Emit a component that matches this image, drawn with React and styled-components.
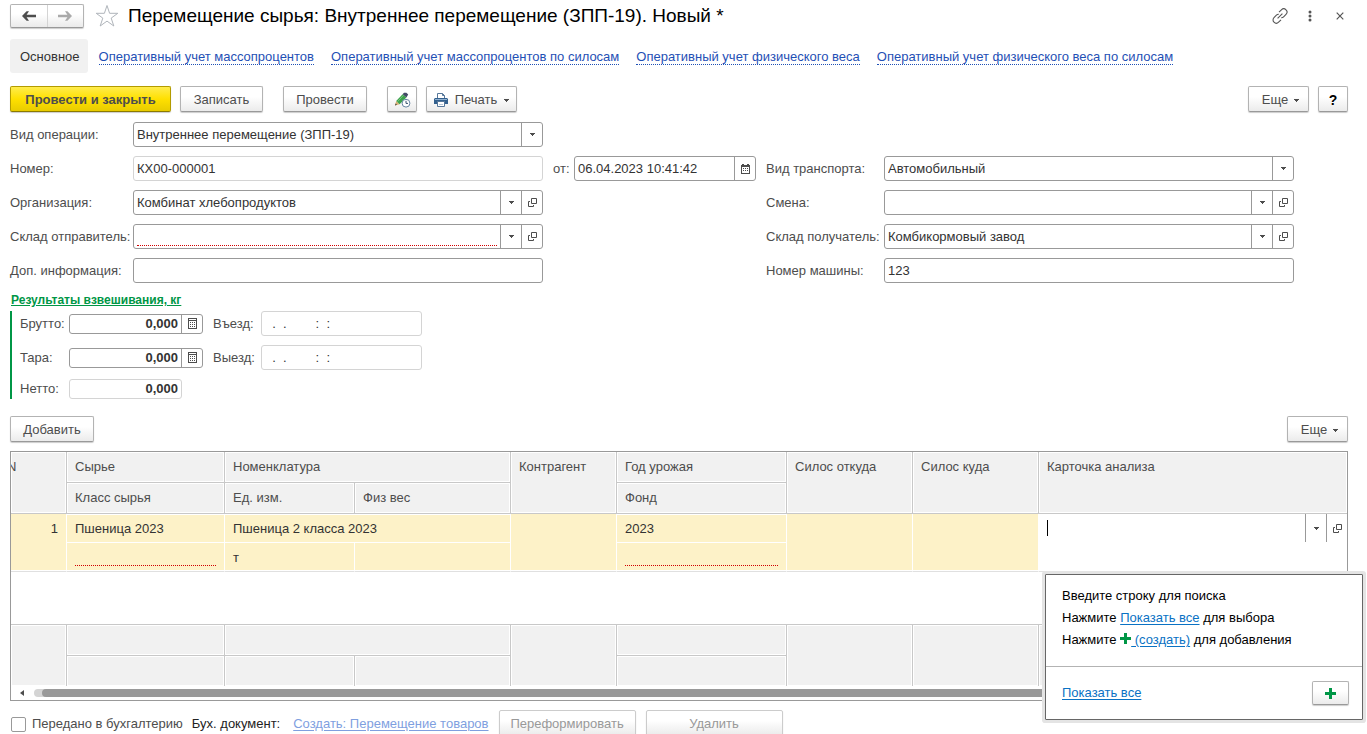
import React from "react";
import styled, { createGlobalStyle, css } from "styled-components";

const GlobalStyle = createGlobalStyle`
  *, *::before, *::after { box-sizing: border-box; }
  body { margin: 0; background: #fff; }
  body, button, input, select, table {
    font-family: "Liberation Sans", Arial, sans-serif;
    font-size: 13px;
    line-height: 16px;
    color: #4d4d4d;
  }
  button, input, select { margin: 0; }
  svg { display: block; flex: none; }
`;

const Page = styled.main`
  height: 100vh;
  overflow: hidden;
  padding: 4px 19px 0 10px;
`;

/* ---------- title ---------- */
const TitleBar = styled.header`
  display: flex;
  align-items: center;
  height: 24px;
  margin-bottom: 11px;
`;
const raised = css`
  border: 1px solid #b3b3b3;
  border-bottom-color: #999;
  border-radius: 2px;
  background: linear-gradient(#fff 40%, #ebebeb);
  box-shadow: 0 1px 1px #ccc;
`;
const NavGroup = styled.div`
  ${raised}
  display: flex;
  width: 74px;
  height: 24px;
  margin-right: 11px;
`;
const NavButton = styled.button`
  flex: 1;
  display: flex;
  align-items: center;
  justify-content: center;
  border: 0;
  padding: 0;
  background: none;
  & + & { border-left: 1px solid #d4d4d4; }
`;
const PlainButton = styled.button`
  display: flex;
  align-items: center;
  justify-content: center;
  width: 24px;
  height: 24px;
  padding: 0;
  border: 0;
  background: none;
`;
const Title = styled.h1`
  flex: 1;
  margin: 0 0 0 9px;
  font-size: 19px;
  font-weight: 400;
  line-height: 24px;
  color: #000;
  white-space: nowrap;
`;
const WindowTools = styled.div`
  display: flex;
  gap: 6px;
  margin-right: -4px;
`;

/* ---------- section links ---------- */
const Tabs = styled.nav`
  display: flex;
  align-items: center;
  height: 34px;
  margin-bottom: 13px;
  white-space: nowrap;
`;
const ActiveTab = styled.span`
  padding: 10px 8px 8px 10px;
  margin-right: 11px;
  border-radius: 3px;
  background: #f1f1f1;
  color: #333;
`;
const TabLink = styled.a`
  margin: 2px 17px 0 0;
  line-height: 14px;
  color: #1f50b5;
  text-decoration: none;
  border-bottom: 1px dotted #1f50b5;
`;

/* ---------- buttons ---------- */
const Bar = styled.div`
  display: flex;
  gap: 20px;
  height: 26px;
  margin-bottom: ${(p) => (p.$after || 9)}px;
`;
const Group = styled.div`
  display: flex;
  gap: 9px;
  ${(p) => p.$end && "margin-left: auto;"}
`;
const Button = styled.button`
  ${raised}
  display: flex;
  align-items: center;
  justify-content: center;
  gap: 7px;
  height: ${(p) => (p.$short ? 24 : 26)}px;
  width: ${(p) => p.$width}px;
  padding: ${(p) => (p.$short ? 0 : "2px 0 0")};
  white-space: nowrap;
  ${(p) => p.$menu && "padding-left: 4px; gap: 6px;"}
  ${(p) => p.$help && "color: #000; font-weight: 700; font-size: 14px;"}
  ${(p) =>
    p.$primary &&
    css`
      font-weight: 700;
      border-color: #b39b00;
      border-bottom-color: #8c7a00;
      background: linear-gradient(#ffec4d, #ffe000 50%, #e8cc00);
    `}
  &:disabled {
    color: #999;
    border-color: #ccc;
  }
`;

/* ---------- fields ---------- */
const FormGrid = styled.div`
  display: grid;
  grid-template-columns: 123px minmax(0, 410px) 31px 182px 128px minmax(0, 410px);
  grid-auto-rows: 25px;
  row-gap: 9px;
  align-items: center;
`;
const Label = styled.label`
  grid-column: ${(p) => p.$col || "auto"};
  padding-left: ${(p) => p.$inset || 0}px;
  white-space: nowrap;
`;
const Field = styled.div`
  display: flex;
  height: ${(p) => (p.$low ? 20 : 25)}px;
  width: ${(p) => (p.$width ? `${p.$width}px` : "auto")};
  border: 1px solid ${(p) => (p.$readonly ? "#d4d4d4" : "#999")};
  border-radius: 3px;
  background: #fff;
`;
const Input = styled.input`
  flex: 1;
  min-width: 0;
  margin: 0 3px;
  padding: 0;
  border: 0;
  outline: 0;
  background: transparent;
  color: #333;
  ${(p) =>
    p.$required && "margin-bottom: 2px; border-bottom: 1px dotted #d00000;"}
  ${(p) => p.$number && "text-align: right; font-weight: 700;"}
`;
const FieldButton = styled.button`
  display: flex;
  align-items: center;
  justify-content: center;
  width: 21px;
  padding: 0;
  border: 0;
  border-left: 1px solid #999;
  background: none;
`;
const SelectField = styled(Field)`
  display: grid;
  grid-template-columns: minmax(0, 1fr) 21px;
`;
const Select = styled.select`
  grid-area: 1 / 1 / 2 / 3;
  appearance: none;
  padding: 0 24px 0 3px;
  border: 0;
  background: transparent;
  color: #333;
`;
const SelectArrow = styled.span`
  grid-area: 1 / 2 / 2 / 3;
  display: flex;
  align-items: center;
  justify-content: center;
  border-left: 1px solid #999;
  pointer-events: none;
`;

/* ---------- weighing ---------- */
const WeighTitle = styled.h2`
  margin: 9px 0 3px 1px;
  font-size: 12px;
  line-height: 16px;
  font-weight: 700;
  color: #009646;
  text-decoration: underline;
`;
const WeighGrid = styled.div`
  display: grid;
  grid-template-columns: 57px 134px 58px 161px;
  grid-template-rows: 25px 25px 20px;
  row-gap: 9px;
  align-items: center;
  border-left: 2px solid #009646;
  margin-bottom: 17px;
`;

/* ---------- table ---------- */
const TableArea = styled.section`
  position: relative;
  margin-bottom: 9px;
`;
const TableFrame = styled.div`
  border: 1px solid #999;
`;
const Table = styled.table`
  width: 100%;
  table-layout: fixed;
  border-collapse: separate;
  border-spacing: 0;
`;
const HeadCell = styled.th`
  height: 31px;
  padding: 7px 8px;
  overflow: hidden;
  text-align: left;
  vertical-align: top;
  font-weight: 400;
  white-space: nowrap;
  background: #f1f1f1;
  border-right: 1px solid #c8c8c8;
  border-bottom: 1px solid #c8c8c8;
  box-shadow: inset 0 0 0 1px #fff;
  ${(p) => p.$scrolled && "padding-left: 0; text-indent: -4px;"}
  ${(p) => p.$last && "border-right: 0;"}
`;
const FootCell = styled.td`
  height: ${(p) => (p.$lower ? 30 : 31)}px;
  padding: 0;
  background: #f1f1f1;
  border-right: 1px solid #c8c8c8;
  border-bottom: ${(p) => (p.$upper ? 1 : 0)}px solid #c8c8c8;
  box-shadow: inset 0 0 0 1px #fff;
`;
const Cell = styled.td`
  height: 29px;
  padding: 7px 8px 4px;
  vertical-align: top;
  color: #333;
  white-space: nowrap;
  background: #fdf2c8;
  border-right: 1px solid #fff;
  border-bottom: 1px solid ${(p) => (p.$upper ? "#fff" : "#e0e0e0")};
  box-shadow: inset 0 ${(p) => (p.$upper ? "1px" : "-1px")} 0 #fff;
  ${(p) => p.$right && "text-align: right;"}
`;
const EditCell = styled(Cell)`
  padding: 0;
  background: #fff;
  border-right: 0;
`;
const Missing = styled.div`
  height: 16px;
  border-bottom: 1px dotted #d00000;
`;
const Editor = styled.div`
  display: flex;
  align-items: center;
  height: 28px;
`;
const Caret = styled.span`
  width: 1px;
  height: 16px;
  margin-left: 8px;
  background: #000;
`;
const EditorButton = styled(FieldButton)`
  height: 28px;
`;
const EmptyRow = styled.td`
  height: 53px;
  padding: 0;
  border-bottom: 1px solid #c8c8c8;
`;
const ScrollBar = styled.div`
  display: flex;
  align-items: center;
  gap: 10px;
  height: 14px;
  padding: 0 9px;
`;
const Track = styled.div`
  flex: 1;
  height: 8px;
  padding-left: 8px;
  border-radius: 4px;
  background: #d4d4d4;
`;
const Thumb = styled.div`
  height: 8px;
  border-radius: 4px;
  background: #999;
`;

/* ---------- lookup popup ---------- */
const Popup = styled.aside`
  position: absolute;
  top: 123px;
  right: -15px;
  width: 318px;
  border: 1px solid #666;
  background: #fff;
  border-radius: 1px;
  box-shadow: 0 0 0 3px #e4e4e4;
  color: #000;
`;
const Hint = styled.div`
  padding: 10px 16px 15px;
  line-height: 22px;
  border-bottom: 1px solid #b3b3b3;
`;
const HintLine = styled.p`
  margin: 0;
  svg { display: inline-block; vertical-align: baseline; }
`;
const PopupFooter = styled.div`
  display: flex;
  align-items: center;
  justify-content: space-between;
  height: 52px;
  padding: 0 13px 0 16px;
`;
const Link = styled.a`
  color: ${(p) => (p.$muted ? "#7f9fdf" : "#0a72c4")};
  text-decoration: underline;
  text-underline-offset: 2px;
`;

/* ---------- bottom ---------- */
const Bottom = styled.footer`
  display: flex;
  align-items: center;
  height: 28px;
  white-space: nowrap;
`;
const Check = styled.label`
  display: flex;
  align-items: center;
  gap: 6px;
  margin: 0 9px 0 1px;
  input {
    appearance: none;
    width: 15px;
    height: 15px;
    border: 1px solid #999;
    border-radius: 2px;
    background: #fff;
  }
`;
const DocLabel = styled.span`
  margin-right: 13px;
  color: #222;
`;
const BottomButtons = styled.div`
  display: flex;
  align-self: flex-start;
  gap: 10px;
  margin-left: 10px;
`;

/* ---------- icons ---------- */
const Arrow = ({ flip, color }) => (
  <svg width="14" height="12" viewBox="0 0 14 12">
    <g transform={flip ? "matrix(-1 0 0 1 14 0)" : undefined}>
      <path d="M0 6 5 1h2v3.8h7v2.4H7V11H5z" fill="none" />
      <path d="M0 6 4.6 1.2H7L4.6 4.8H14v2.4H4.6L7 10.8H4.6z" fill={color} />
    </g>
  </svg>
);
const Star = () => (
  <svg width="24" height="24" viewBox="0 0 24 24" fill="none" stroke="#b0b5bb">
    <path d="M12 1.5 14.6 9.3H22.8L16.2 14.1 18.8 22 12 17.1 5.2 22 7.8 14.1 1.2 9.3H9.4z" />
  </svg>
);
const Chain = () => (
  <svg width="16" height="16" viewBox="0 0 16 16" fill="none" stroke="#555" strokeWidth="1.1">
    <path d="M7 4.2 9.4 1.8a3.2 3.2 0 0 1 4.6 4.6L11.6 8.8a3 3 0 0 1-2.4.9" />
    <path d="M9 11.8 6.6 14.2A3.2 3.2 0 0 1 2 9.6L4.4 7.2a3 3 0 0 1 2.4-.9" />
    <path d="m5.6 10.4 4.8-4.8" />
  </svg>
);
const Dots = () => (
  <svg width="4" height="12" viewBox="0 0 4 12" fill="#555">
    <circle cx="2" cy="2" r="1.5" /><circle cx="2" cy="6" r="1.5" /><circle cx="2" cy="10" r="1.5" />
  </svg>
);
const Cross = () => (
  <svg width="8" height="8" viewBox="0 0 8 8" stroke="#555" strokeWidth="1.2">
    <path d="m.7.7 6.6 6.6M7.3.7.7 7.3" />
  </svg>
);
const Down = () => (
  <svg width="5" height="3" viewBox="0 0 5 3" fill="#4d4d4d">
    <path d="M0 0h5v1H4v1H3v1H2V2H1V1H0z" />
  </svg>
);
const Open = () => (
  <svg width="9" height="9" viewBox="0 0 9 9" fill="none" stroke="#4d4d4d">
    <path d="M3.5.5h5v5h-5zM2 3.5H.5v5h5V7" />
  </svg>
);
const Calendar = () => (
  <svg width="9" height="10" viewBox="0 0 9 10" fill="#4d4d4d">
    <path d="M0 1h1V0h2v1h3V0h2v1h1v9H0zM1 3v6h7V3z" fillRule="evenodd" />
    <path d="M2 4h1v1H2zM4 4h1v1H4zM6 4h1v1H6zM2 6h1v1H2zM4 6h1v1H4zM6 6h1v1H6z" />
  </svg>
);
const Calculator = () => (
  <svg width="9" height="11" viewBox="0 0 9 11" fill="#4d4d4d">
    <path d="M0 0h9v11H0zM1 1v1h7V1zM1 3v7h7V3z" fillRule="evenodd" />
    <path d="M2 4h1v1H2zM4 4h1v1H4zM6 4h1v1H6zM2 6h1v1H2zM4 6h1v1H4zM6 6h1v1H6zM2 8h1v1H2zM4 8h1v1H4zM6 8h1v1H6z" />
  </svg>
);
const PencilClock = () => (
  <svg width="17" height="16" viewBox="0 0 17 16">
    <path d="M1 13.5 2.2 9l3.4 3.2z" fill="#d7ae72" />
    <path d="M1 13.5 1.6 11.4 3 12.8z" fill="#444" />
    <path d="M2.2 9 8.6 2.2 12.4 5.4 5.6 12.2z" fill="#3da24c" />
    <path d="M3.6 9.6 9.6 3.2" stroke="#75c77c" />
    <path d="M8.6 2.2 10 .8h2.4l1.8 1.8-1.8 2.8z" fill="#424a66" />
    <circle cx="12" cy="11.2" r="3.9" fill="#fff" stroke="#6683a0" />
    <path d="M12 8.8v2.6h2" fill="none" stroke="#35506e" />
  </svg>
);
const Printer = () => (
  <svg width="14" height="14" viewBox="0 0 14 14">
    <path d="M3.5 5V.5h5l2 2V5" fill="#fff" stroke="#56779a" />
    <path d="M8.5.5v2h2" fill="none" stroke="#56779a" />
    <path d="M1 5h12l1 1v5H0V6z" fill="#33608e" />
    <path d="M1 6.5h12" stroke="#8fb0d0" />
    <path d="M3.5 8.5h7v5h-7z" fill="#fff" stroke="#56779a" />
    <path d="M5 11.5h4" stroke="#b7c7d8" />
  </svg>
);
const Plus = () => (
  <svg width="11" height="11" viewBox="0 0 11 11" fill="#009646">
    <path d="M4 0h3v4h4v3H7v4H4V7H0V4h4z" />
  </svg>
);
const Left = () => (
  <svg width="4" height="6" viewBox="0 0 4 6" fill="#4d4d4d"><path d="M4 0v6L0 3z" /></svg>
);

/* ---------- field kinds ---------- */
function ChoiceField({ id, label, value, col, inset }) {
  return (
    <>
      <Label htmlFor={id} $col={col} $inset={inset}>{label}</Label>
      <SelectField>
        <Select id={id} defaultValue={value}><option>{value}</option></Select>
        <SelectArrow><Down /></SelectArrow>
      </SelectField>
    </>
  );
}
function LookupField({ id, label, value = "", required, col, inset }) {
  return (
    <>
      <Label htmlFor={id} $col={col} $inset={inset}>{label}</Label>
      <Field>
        <Input id={id} defaultValue={value} $required={required} />
        <FieldButton type="button" aria-label="Выбрать"><Down /></FieldButton>
        <FieldButton type="button" aria-label="Открыть"><Open /></FieldButton>
      </Field>
    </>
  );
}
function TextField({ id, label, value = "", readOnly, col, inset, children }) {
  return (
    <>
      <Label htmlFor={id} $col={col} $inset={inset}>{label}</Label>
      <Field $readonly={readOnly}>
        <Input id={id} defaultValue={value} readOnly={readOnly} />
        {children}
      </Field>
    </>
  );
}
function WeightField({ id, label, readOnly }) {
  return (
    <>
      <Label htmlFor={id} $inset={8} $col={1}>{label}</Label>
      <Field $low $readonly={readOnly} $width={readOnly ? 113 : 134}>
        <Input id={id} defaultValue="0,000" readOnly={readOnly} $number />
        {!readOnly && (
          <FieldButton type="button" aria-label="Калькулятор"><Calculator /></FieldButton>
        )}
      </Field>
    </>
  );
}

const emptyTime = "\u00a0\u00a0.\u00a0\u00a0.\u00a0\u00a0\u00a0\u00a0\u00a0\u00a0\u00a0\u00a0:\u00a0\u00a0:";
const links = [
  "Оперативный учет массопроцентов",
  "Оперативный учет массопроцентов по силосам",
  "Оперативный учет физического веса",
  "Оперативный учет физического веса по силосам",
];
const columns = [56, 158, 130, 156, 106, 170, 126, 126];

export default function App() {
  return (
    <Page>
      <GlobalStyle />
      <TitleBar>
        <NavGroup>
          <NavButton type="button" aria-label="Назад"><Arrow color="#4d4d4d" /></NavButton>
          <NavButton type="button" aria-label="Вперед"><Arrow flip color="#aaa" /></NavButton>
        </NavGroup>
        <PlainButton type="button" aria-label="В избранное"><Star /></PlainButton>
        <Title>Перемещение сырья: Внутреннее перемещение (ЗПП-19). Новый *</Title>
        <WindowTools>
          <PlainButton type="button" aria-label="Ссылка"><Chain /></PlainButton>
          <PlainButton type="button" aria-label="Меню"><Dots /></PlainButton>
          <PlainButton type="button" aria-label="Закрыть"><Cross /></PlainButton>
        </WindowTools>
      </TitleBar>

      <Tabs>
        <ActiveTab>Основное</ActiveTab>
        {links.map((text) => <TabLink href="#" key={text}>{text}</TabLink>)}
      </Tabs>

      <Bar $after={10}>
        <Group>
          <Button type="button" $primary $width={161}>Провести и закрыть</Button>
          <Button type="button" $width={83}>Записать</Button>
        </Group>
        <Button type="button" $width={84}>Провести</Button>
        <Group>
          <Button type="button" $width={30} aria-label="Отложить"><PencilClock /></Button>
          <Button type="button" $width={91}><Printer />Печать<Down /></Button>
        </Group>
        <Group $end>
          <Button type="button" $menu $width={61}>Еще<Down /></Button>
          <Button type="button" $width={30} $help>?</Button>
        </Group>
      </Bar>

      <FormGrid>
        <ChoiceField id="operation" label="Вид операции:" value="Внутреннее перемещение (ЗПП-19)" col={1} />
        <TextField id="number" label="Номер:" value="КХ00-000001" readOnly col={1} />
        <TextField id="date" label="от:" value="06.04.2023 10:41:42" inset={10}>
          <FieldButton type="button" aria-label="Календарь"><Calendar /></FieldButton>
        </TextField>
        <ChoiceField id="transport" label="Вид транспорта:" value="Автомобильный" inset={10} />
        <LookupField id="company" label="Организация:" value="Комбинат хлебопродуктов" col={1} />
        <LookupField id="shift" label="Смена:" col={5} inset={10} />
        <LookupField id="from" label="Склад отправитель:" required col={1} />
        <LookupField id="to" label="Склад получатель:" value="Комбикормовый завод" col={5} inset={10} />
        <TextField id="extra" label="Доп. информация:" col={1} />
        <TextField id="car" label="Номер машины:" value="123" col={5} inset={10} />
      </FormGrid>

      <WeighTitle>Результаты взвешивания, кг</WeighTitle>
      <WeighGrid>
        <WeightField id="gross" label="Брутто:" />
        <TextField id="entry" label="Въезд:" value={emptyTime} readOnly inset={10} />
        <WeightField id="tare" label="Тара:" />
        <TextField id="exit" label="Выезд:" value={emptyTime} readOnly inset={10} />
        <WeightField id="net" label="Нетто:" readOnly />
      </WeighGrid>

      <Bar>
        <Button type="button" $width={84}>Добавить</Button>
        <Group $end><Button type="button" $menu $width={61}>Еще<Down /></Button></Group>
      </Bar>

      <TableArea>
        <TableFrame>
          <Table>
            <colgroup>
              {columns.map((width, i) => <col key={i} width={width} />)}
              <col />
            </colgroup>
            <thead>
              <tr>
                <HeadCell rowSpan={2} $scrolled>N</HeadCell>
                <HeadCell>Сырье</HeadCell>
                <HeadCell colSpan={2}>Номенклатура</HeadCell>
                <HeadCell rowSpan={2}>Контрагент</HeadCell>
                <HeadCell>Год урожая</HeadCell>
                <HeadCell rowSpan={2}>Силос откуда</HeadCell>
                <HeadCell rowSpan={2}>Силос куда</HeadCell>
                <HeadCell rowSpan={2} $last>Карточка анализа</HeadCell>
              </tr>
              <tr>
                <HeadCell>Класс сырья</HeadCell>
                <HeadCell>Ед. изм.</HeadCell>
                <HeadCell>Физ вес</HeadCell>
                <HeadCell>Фонд</HeadCell>
              </tr>
            </thead>
            <tbody>
              <tr>
                <Cell rowSpan={2} $right>1</Cell>
                <Cell $upper>Пшеница 2023</Cell>
                <Cell $upper colSpan={2}>Пшеница 2 класса 2023</Cell>
                <Cell rowSpan={2} />
                <Cell $upper>2023</Cell>
                <Cell rowSpan={2} />
                <Cell rowSpan={2} />
                <EditCell rowSpan={2}>
                  <Editor>
                    <Caret />
                    <Input aria-label="Карточка анализа" />
                    <EditorButton type="button" aria-label="Выбрать"><Down /></EditorButton>
                    <EditorButton type="button" aria-label="Открыть"><Open /></EditorButton>
                  </Editor>
                </EditCell>
              </tr>
              <tr>
                <Cell><Missing /></Cell>
                <Cell>т</Cell>
                <Cell />
                <Cell><Missing /></Cell>
              </tr>
              <tr><EmptyRow colSpan={9} /></tr>
            </tbody>
            <tfoot>
              <tr>
                <FootCell rowSpan={2} />
                <FootCell $upper />
                <FootCell $upper colSpan={2} />
                <FootCell rowSpan={2} />
                <FootCell $upper />
                <FootCell rowSpan={2} />
                <FootCell rowSpan={2} />
                <FootCell rowSpan={2} />
              </tr>
              <tr>
                <FootCell $lower />
                <FootCell $lower />
                <FootCell $lower />
                <FootCell $lower />
              </tr>
            </tfoot>
          </Table>
          <ScrollBar>
            <Left />
            <Track><Thumb /></Track>
          </ScrollBar>
        </TableFrame>

        <Popup>
          <Hint>
            <HintLine>Введите строку для поиска</HintLine>
            <HintLine>Нажмите <Link href="#">Показать все</Link> для выбора</HintLine>
            <HintLine>Нажмите <Plus /><Link href="#">&nbsp;(создать)</Link> для добавления</HintLine>
          </Hint>
          <PopupFooter>
            <Link href="#">Показать все</Link>
            <Button type="button" $short $width={37} aria-label="Создать"><Plus /></Button>
          </PopupFooter>
        </Popup>
      </TableArea>

      <Bottom>
        <Check><input type="checkbox" />Передано в бухгалтерию</Check>
        <DocLabel>Бух. документ:</DocLabel>
        <Link href="#" $muted>Создать: Перемещение товаров</Link>
        <BottomButtons>
          <Button type="button" disabled $width={137}>Переформировать</Button>
          <Button type="button" disabled $width={137}>Удалить</Button>
        </BottomButtons>
      </Bottom>
    </Page>
  );
}
